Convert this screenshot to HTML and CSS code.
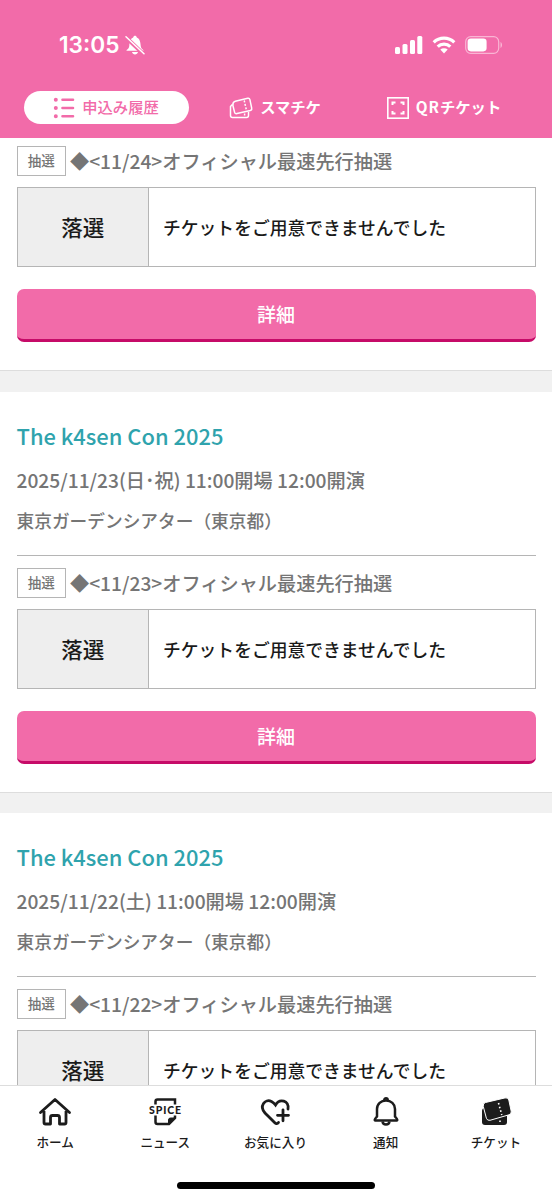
FILE: index.html
```html
<!DOCTYPE html>
<html lang="ja">
<head>
  <meta charset="UTF-8" />
  <meta name="viewport" content="width=device-width, initial-scale=1.0"/>
  <title>申込み履歴</title>
  <link rel="stylesheet" href="styles.css">
</head>
<body>
  <header class="header">
    <div class="status-bar">
      <div class="clock">
        <span>13:05</span>
        <svg width="20" height="20" viewBox="0 0 20 20">
          <path d="M1.500 15.800c0-1.600 2.600-1.800 2.800-5.100C4.500 6.500 5.800 3.200 8.200 2.500 8.500.2 11.500.2 11.800 2.500c2.400.7 3.700 4 3.900 8.200.2 3.300 2.800 3.500 2.800 5.100zM7 17h6c-.6 3.200-5.400 3.200-6 0z" fill="#fff"/>
          <path d="M0 1.500L19 19.500" stroke="#f26ba9" stroke-width="4"/>
          <path d="M1 1.800L19 18.800" stroke="#fff" stroke-width="1.500" stroke-linecap="round"/>
        </svg>
      </div>
      <div class="indicators">
        <svg width="28" height="18" viewBox="0 0 28 18" fill="#fff">
          <rect x="0" y="11" width="5" height="7" rx="1.500"/>
          <rect x="7.500" y="8" width="5" height="10" rx="1.500"/>
          <rect x="15" y="4" width="5" height="14" rx="1.500"/>
          <rect x="22.300" y="0" width="5" height="18" rx="1.500"/>
        </svg>
        <svg width="24" height="18" viewBox="0 0 24 18" fill="none" stroke="#fff" stroke-width="3.200">
          <path d="M1.700 6.300a14.800 14.800 0 0 1 20.600 0"/>
          <path d="M5.700 10.600a9 9 0 0 1 12.600 0"/>
          <path d="M8.300 13.600a5.400 5.400 0 0 1 7.400 0L12 17.400z" fill="#fff" stroke="none"/>
        </svg>
        <svg width="38" height="18" viewBox="0 0 38 18">
          <rect x=".7" y=".7" width="33" height="16.600" rx="5" fill="none" stroke="#f9b5d4" stroke-width="1.200"/>
          <rect x="2.600" y="2.600" width="19" height="12.800" rx="3.300" fill="#fff"/>
          <path d="M35.500 6v6c2-1 2-5 0-6z" fill="#f9b5d4"/>
        </svg>
      </div>
    </div>
    <nav class="tabs">
      <a class="tab active">
        <svg width="22" height="22" viewBox="0 0 22 22" fill="none" stroke="#f26ba9" stroke-linecap="round">
          <path d="M9.500 2.700h10.500M9.500 11h10.500M9.500 19.300h10.500" stroke-width="2.600"/>
          <path d="M2.800 2.700h.01M2.800 11h.01M2.800 19.300h.01" stroke-width="4"/>
        </svg>
        <span>申込み履歴</span>
      </a>
      <a class="tab">
        <svg width="24" height="22" viewBox="0 0 24 22" fill="none" stroke="#fff" stroke-width="1.500" stroke-linejoin="round">
          <path d="M3.400 7.500L1.500 9.500v9q0 2 2 2h14q2 0 2-2v-3.500"/>
          <path d="M6.300 4.300L18.700 1.300q1.800-.4 2.200 1.300l1.800 8.600q.4 1.700-1.300 2.200L8 16.600q-1.800.4-2.400-1.200L3.900 8.500Q3.500 5 6.300 4.300z"/>
          <path d="M15.200 3.500l2.200 9.500M15.600 16.500v3" stroke-dasharray="2 1.500"/>
        </svg>
        <span>スマチケ</span>
      </a>
      <a class="tab">
        <svg width="22" height="22" viewBox="0 0 22 22" fill="none" stroke="#fff">
          <rect x=".8" y=".8" width="20.400" height="20.400" stroke-width="1.600"/>
          <path d="M5.500 8V5.500h3M13.500 5.500h3V8M16.500 14v2.500h-3M8.500 16.500h-3V14" stroke-width="2"/>
        </svg>
        <span><span class="qr">QR</span>チケット</span>
      </a>
    </nav>
  </header>

  <main class="list">
    <section class="entry">
      <div class="lottery"><span class="tag">抽選</span><span>◆&lt;11/24&gt;オフィシャル最速先行抽選</span></div>
      <div class="result">
        <div class="result-status">落選</div>
        <div class="result-text">チケットをご用意できませんでした</div>
      </div>
      <button class="detail-button">詳細</button>
    </section>

    <section class="entry">
      <h2>The k4sen Con 2025</h2>
      <p class="date">2025/11/23(日･祝) 11:00開場 12:00開演</p>
      <p class="venue">東京ガーデンシアター（東京都）</p>
      <hr>
      <div class="lottery"><span class="tag">抽選</span><span>◆&lt;11/23&gt;オフィシャル最速先行抽選</span></div>
      <div class="result">
        <div class="result-status">落選</div>
        <div class="result-text">チケットをご用意できませんでした</div>
      </div>
      <button class="detail-button">詳細</button>
    </section>

    <section class="entry">
      <h2>The k4sen Con 2025</h2>
      <p class="date">2025/11/22(土) 11:00開場 12:00開演</p>
      <p class="venue">東京ガーデンシアター（東京都）</p>
      <hr>
      <div class="lottery"><span class="tag">抽選</span><span>◆&lt;11/22&gt;オフィシャル最速先行抽選</span></div>
      <div class="result">
        <div class="result-status">落選</div>
        <div class="result-text">チケットをご用意できませんでした</div>
      </div>
    </section>
  </main>

  <footer class="footer">
    <nav class="bottom-nav">
      <a class="nav-item">
        <svg width="36" height="30" viewBox="0 0 36 30" fill="none" stroke="#1c1c1c" stroke-width="2.800" stroke-linecap="round" stroke-linejoin="round">
          <path d="M3.500 15.500L18 2.500l14.500 13M7 14v11.500q0 1.500 1.500 1.500h5v-6.500q0-2 2-2h5q2 0 2 2V27h5q1.500 0 1.500-1.500V14"/>
        </svg>
        <span>ホーム</span>
      </a>
      <a class="nav-item">
        <svg width="36" height="30" viewBox="0 0 36 30" fill="none" stroke="#1c1c1c" stroke-width="2.500">
          <path d="M8.500 7.500V4.500q0-2 2-2h17.500v5M8.500 18.500v6.500q0 2 2 2h11.500l6-6v-2.500"/>
          <path d="M21.500 27v-4q0-2 2-2h4z" fill="#1c1c1c" stroke-width="1"/>
          <text class="spice" x="2" y="16.500" textLength="32">SPICE</text>
        </svg>
        <span>ニュース</span>
      </a>
      <a class="nav-item">
        <svg width="36" height="30" viewBox="0 0 36 30" fill="none" stroke="#1c1c1c" stroke-width="2.800" stroke-linecap="round">
          <path d="M21.500 25.500c-1 1.500-2.500 1.500-3.700.3L8 16C2 9.500 7.800 1.300 14.500 4.500q2.300 1.200 4 3.500C22.500 1 32.500 3.500 31 12M26 12.800v11M20.500 18.300h11"/>
        </svg>
        <span>お気に入り</span>
      </a>
      <a class="nav-item">
        <svg width="36" height="30" viewBox="0 0 36 30" fill="none" stroke="#1c1c1c" stroke-width="2.500" stroke-linejoin="round">
          <path d="M7 23.500c-1-1.200.8-2.500 2-4V12c0-5 4-8.500 9-8.500s9 3.500 9 8.500v7.500c1.200 1.500 3 2.800 2 4z"/>
          <path d="M16.300 3c0-2.300 3.400-2.300 3.400 0M14.500 24.500c.5 4 6.500 4 7 0"/>
        </svg>
        <span>通知</span>
      </a>
      <a class="nav-item">
        <svg width="36" height="30" viewBox="0 0 36 30">
          <rect x="4" y="11" width="25" height="17" rx="3" fill="#1c1c1c"/>
          <path d="M7.500 5.500L27 .9q3-.6 3.800 2.100l2.400 11.200q.5 2.700-2.200 3.600l-19 5.500q-2.700.5-3.600-2L5.300 9.500Q4.700 6.300 7.500 5.500z" fill="#1c1c1c" stroke="#fff" stroke-width="1"/>
          <path d="M20.500 6l3.300 12M22 23.500v3" stroke="#fff" stroke-width="1.600" stroke-dasharray="1.600 2.200"/>
        </svg>
        <span>チケット</span>
      </a>
    </nav>
    <div class="home-indicator"></div>
  </footer>
</body>
</html>
```

FILE: styles.css
```css
* {
  box-sizing: border-box;
}

body {
  margin: 0;
  height: 1200px;
  display: flex;
  flex-direction: column;
  overflow: hidden;
  background-color: #fff;
  color: #757575;
  font-family: 'Noto Sans CJK JP', sans-serif;
  font-weight: 500;
}

svg {
  display: block;
  flex: none;
}

.header {
  height: 138px;
  flex: none;
  background-color: #f26ba9;
  color: #fff;
}

.status-bar {
  height: 91px;
  padding: 0 49px 2px 59px;
  display: flex;
  justify-content: space-between;
  align-items: center;
}

.clock {
  display: flex;
  align-items: center;
  gap: 5px;
  font-family: Inter, sans-serif;
  font-size: 22.7px;
  font-weight: 600;
}

.indicators {
  display: flex;
  align-items: center;
  gap: 9px;
}

.tabs {
  display: grid;
  grid-template-columns: 165px 165px 165px;
  gap: 4px;
  padding: 0 24px;
}

.tab {
  height: 33px;
  padding-right: 1px;
  display: flex;
  align-items: center;
  justify-content: center;
  gap: 7px;
  border-radius: 17px;
  font-size: 15.3px;
  font-weight: 700;
  line-height: 31px;
}

.tab > span {
  margin-top: -2px;
}

.tab.active {
  background-color: #fff;
  color: #f26ba9;
}

.tab.active > span {
  font-weight: 500;
}

.qr {
  letter-spacing: 1px;
}

.list {
  flex: 1;
  min-height: 0;
  overflow: hidden;
  background-color: #f1f1f1;
}

.entry {
  padding: 28px 16.5px 28px;
  margin-bottom: 20.4px;
  background-color: #fff;
  border-bottom: 1px solid #ddd;
}

.entry:first-child {
  padding-top: 8px;
  margin-bottom: 21px;
}

h2 {
  margin: 0;
  color: #2fa3ad;
  font-size: 21.9px;
  font-weight: 500;
  line-height: 32px;
}

.date, .venue {
  margin: 0;
  line-height: 30px;
  white-space: nowrap;
}

.date {
  margin-top: 13px;
  font-size: 19.2px;
}

.venue {
  margin-top: 10px;
  font-size: 17.7px;
}

hr {
  height: 1px;
  margin: 20px 0 12px;
  border: none;
  background-color: #b5b5b5;
}

.lottery {
  height: 30px;
  display: flex;
  align-items: center;
  gap: 4px;
  font-size: 19.2px;
  line-height: 28px;
  white-space: nowrap;
}

.tag {
  width: 49.5px;
  height: 30px;
  border: 1px solid #b5b5b5;
  font-size: 13.5px;
  line-height: 27px;
  text-align: center;
}

.result {
  height: 80px;
  margin-top: 11px;
  display: grid;
  grid-template-columns: 131.5px 1fr;
  border: 1px solid #b5b5b5;
  color: #1a1a1a;
}

.result-status {
  display: flex;
  align-items: center;
  justify-content: center;
  padding-bottom: 1px;
  background-color: #eee;
  border-right: 1px solid #b5b5b5;
  font-size: 21.5px;
}

.result-text {
  display: flex;
  align-items: center;
  padding-left: 14px;
  font-size: 17.8px;
}

.detail-button {
  display: block;
  width: 100%;
  height: 53px;
  margin-top: 22px;
  padding: 0 0 1px;
  border: none;
  border-bottom: 3px solid #c60b68;
  border-radius: 7px;
  background-color: #f26ba9;
  color: #fff;
  font-family: inherit;
  font-size: 19px;
  font-weight: 500;
}

.footer {
  height: 115px;
  flex: none;
  border-top: 1px solid #ddd;
  background-color: #fff;
}

.bottom-nav {
  height: 99px;
  padding: 11px 1px 0 0;
  display: grid;
  grid-template-columns: repeat(5, 1fr);
}

.nav-item {
  display: flex;
  flex-direction: column;
  align-items: center;
  gap: 5px;
  color: #1c1c1c;
  font-size: 12.6px;
  font-weight: 500;
  line-height: 20px;
}

.spice {
  fill: #1c1c1c;
  stroke: none;
  font-family: Lato, sans-serif;
  font-size: 10.5px;
  font-weight: 900;
}

.home-indicator {
  width: 198px;
  height: 7px;
  margin: -3px auto 0;
  border-radius: 4px;
  background-color: #000;
}
```
